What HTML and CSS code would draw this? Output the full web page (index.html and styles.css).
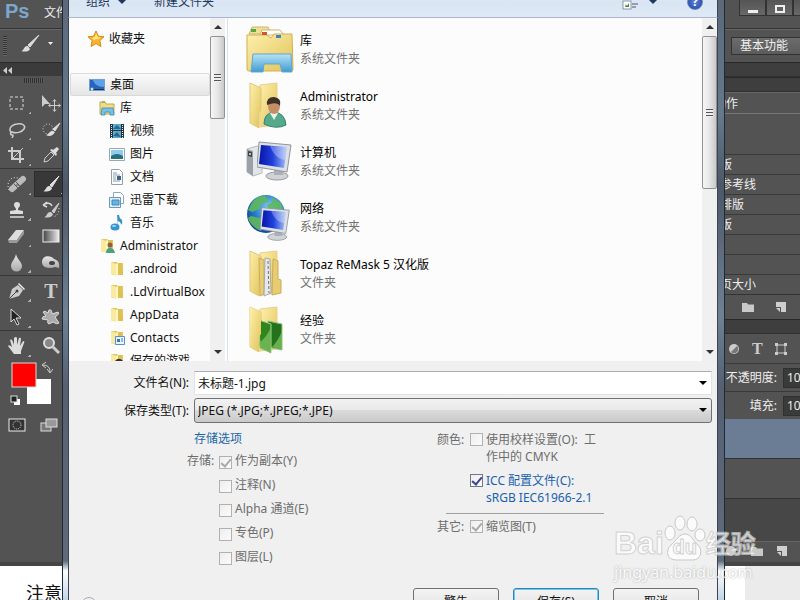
FILE: index.html
```html
<!DOCTYPE html>
<html lang="zh-CN">
  <head>
    <title>存储为</title>
    <meta charset="UTF-8" />
    <link rel="stylesheet" href="styles.css">
  </head>
  <body>
    <svg class="defs" aria-hidden="true">
      <defs>
        <linearGradient id="yellow" x1="0" x2="1" y2="1">
          <stop offset="0" stop-color="#fdf0ae" />
          <stop offset="1" stop-color="#e2c258" />
        </linearGradient>
        <linearGradient id="screen" x1="0" x2="1">
          <stop offset="0" stop-color="#0714a8" />
          <stop offset="0.5" stop-color="#2142dc" />
          <stop offset="1" stop-color="#a9c2f8" />
        </linearGradient>
        <linearGradient id="glass" x2="0" y2="1">
          <stop offset="0" stop-color="#b9e3f5" />
          <stop offset="1" stop-color="#3f9bd3" />
        </linearGradient>
        <linearGradient id="silver" x2="0" y2="1">
          <stop offset="0" stop-color="#e6e6e6" />
          <stop offset="1" stop-color="#aaa" />
        </linearGradient>
        <radialGradient id="globe" cx="0.6" cy="0.35" r="0.7">
          <stop offset="0" stop-color="#8ed4fa" />
          <stop offset="0.6" stop-color="#2578cc" />
          <stop offset="1" stop-color="#123f90" />
        </radialGradient>
        <symbol id="folder" viewBox="0 0 16 16">
          <path d="M2 1h6l1 1h5v12H4l-2-1z" fill="#e5c860" />
          <path d="M2 1l5 2v12l-5-2z" fill="#f9eaa0" />
          <path d="M7 3l2-1v12l-2 1z" fill="#fff6c8" />
          <path d="M9 2h4v6l1 1v5H9z" fill="#dfc050" />
        </symbol>
        <symbol id="open-folder" viewBox="0 0 48 48">
          <path d="M14 3l17-2v42l-17 2z" fill="url(#yellow)" stroke="#e6d28c" />
          <path d="M4 1l11 5v22l-2 3v15L4 41z" fill="url(#yellow)" stroke="#e0c878" />
        </symbol>
        <symbol id="monitor" viewBox="0 0 36 40">
          <ellipse cx="20" cy="35" rx="11" ry="4" fill="#d0d3d7" stroke="#999" />
          <path d="M17 27h8l1 7h-9z" fill="#aab0b6" />
          <path d="M2 1l32 3-4 27-30-5z" fill="#dde1e6" stroke="#8e959d" />
          <path d="M4 4l26 2-3 21-25-4z" fill="url(#screen)" />
          <path d="M13 5l17 1-2 13c-7-1-12-6-15-14z" fill="#fff" opacity="0.3" />
        </symbol>
        <symbol id="panel-folder" viewBox="0 0 14 12">
          <path d="M1 2h5l1 1.500h6V11H1z" fill="#c9c9c9" />
        </symbol>
        <symbol id="panel-new" viewBox="0 0 12 12">
          <path d="M1 1h10v10H6V6H1z" fill="#cfcfcf" />
          <path d="M1 7h4v4z" fill="#cfcfcf" />
        </symbol>
      </defs>
    </svg>

    <div class="desktop">
      <div class="photoshop">
        <div class="menubar">
          <span class="logo">Ps</span>
          <a class="menu" href="#">文件</a>
          <div class="window-buttons">
            <button aria-label="最小化"><svg width="12" height="12"><path d="M1 8h10v3H1z" fill="#eee" /></svg></button>
            <button aria-label="最大化"><svg width="12" height="12"><rect x="2" y="4" width="8" height="6" fill="none" stroke="#eee" stroke-width="2" /></svg></button>
            <button aria-label="关闭"></button>
          </div>
        </div>

        <div class="optionbar">
          <span class="grip-tall"></span>
          <button class="brush-preset" aria-label="画笔">
            <svg width="34" height="18" viewBox="0 0 34 18">
              <path d="M19 0L8 10l2 2z" fill="#ddd" stroke="#ddd" />
              <path d="M1 16c3 0 3-6 7-5l2 3c-1 3-6 3-9 2z" fill="#ddd" />
              <path d="M28 7h5l-2.500 3z" fill="#eee" />
            </svg>
          </button>
          <button class="workspace-button">基本功能</button>
        </div>

        <div class="main">
          <div class="tools">
            <div class="tools-header"><svg width="9" height="7"><path d="M4 0v7L0 3.500zM9 0v7L5 3.500z" fill="#ccc" /></svg></div>
            <div class="grip"></div>
            <div class="tool-group">
              <button aria-label="矩形选框"><svg viewBox="0 0 20 20"><rect x="3" y="4" width="13" height="12" fill="none" stroke="#ddd" stroke-dasharray="3 2" /></svg></button>
              <button aria-label="移动"><svg viewBox="0 0 20 20"><path d="M1 2v12l3-3h5z" fill="#ccc" /><path d="M13.500 7v11M8 12.500h11M12 8.500l1.500-2 1.500 2M12 16.500l1.500 2 1.500-2M9.500 11l-2 1.500 2 1.500M17.500 11l2 1.500-2 1.500" fill="none" stroke="#ccc" /></svg></button>
              <button aria-label="套索"><svg viewBox="0 0 20 20"><path d="M5 14c-4-3-2-8 5-9 6-1 9 2 7 5s-8 5-12 3c-2 0-2 3 0 3s1 1 0 3" fill="none" stroke="#ccc" stroke-width="1.500" /></svg></button>
              <button aria-label="快速选择"><svg viewBox="0 0 20 20"><circle cx="7" cy="10" r="5" fill="none" stroke="#ddd" stroke-dasharray="1 2" /><path d="M19 4l-7 6 2 2z" stroke="#ddd" fill="#ddd" /><path d="M5 16c3 0 4-5 7-4l2 1c-2 4-6 5-9 3z" fill="#ddd" /></svg></button>
              <button aria-label="裁剪"><svg viewBox="0 0 20 20"><path d="M5 2v12h12M1 6h12v12" fill="none" stroke="#ccc" stroke-width="2" /><path d="M4 15L16 3" stroke="#ccc" /></svg></button>
              <button aria-label="吸管"><svg viewBox="0 0 20 20"><path d="M3 17l1-4 6-6 3 3-6 6z" fill="none" stroke="#ccc" /><path d="M9 5l6 6 1-2-1-1 3-4-2-2-4 3-1-1z" fill="#ddd" /></svg></button>
            </div>
            <div class="tool-group">
              <button aria-label="修复画笔"><svg viewBox="0 0 20 20"><path d="M2 16c-3-7 1-14 9-12" fill="none" stroke="#ddd" stroke-dasharray="1 2" /><path d="M5 15L16 5" stroke="#bbb" stroke-width="6" stroke-linecap="round" /><path d="M9 8l5 5M7 10l5 5M9 11h3" stroke="#555" /></svg></button>
              <button class="active" aria-label="画笔工具"><svg viewBox="0 0 20 20"><path d="M18 2L9 11l2 2z" fill="#ddd" stroke="#ddd" /><path d="M2 17c3 0 3-6 7-5l2 2c-1 4-6 4-9 3z" fill="#ddd" /></svg></button>
              <button aria-label="仿制图章"><svg viewBox="0 0 20 20"><path d="M9 10c0-3-2-3-2-5a3 3 0 016 0c0 2-2 2-2 5l5 1v3H3v-3z" fill="#ddd" /><path d="M3 16h14v2H3z" fill="#bbb" /></svg></button>
              <button aria-label="历史记录画笔"><svg viewBox="0 0 20 20"><path d="M2 5c4-3 8-2 9 1M2 5l4-3M2 5l4 2" fill="none" stroke="#ddd" stroke-width="1.500" /><path d="M18 3l-7 8 2 2z" fill="#ccc" stroke="#ccc" /><path d="M3 17c3 0 3-6 7-5l2 2c-1 4-6 4-9 3z" fill="#ccc" /><path d="M18 8c0 5-2 8-6 9" fill="none" stroke="#ddd" stroke-dasharray="1 2" /></svg></button>
              <button aria-label="橡皮擦"><svg viewBox="0 0 20 20"><path d="M1 14L9 4h8l-7 10z" fill="#ddd" /><path d="M1 14h9v3H2zM10 14l7-10v4l-7 9z" fill="#999" /></svg></button>
              <button aria-label="渐变"><svg viewBox="0 0 20 20"><rect x="2" y="4" width="16" height="12" fill="url(#tool-gradient)" stroke="#eee" /><linearGradient id="tool-gradient"><stop stop-color="#444" /><stop offset="1" stop-color="#eee" /></linearGradient></svg></button>
              <button aria-label="模糊"><svg viewBox="0 0 20 20"><path d="M9 2c1 5 6 8 6 12a5 5 0 01-11 0c0-4 4-7 5-12z" fill="url(#silver)" /></svg></button>
              <button aria-label="减淡"><svg viewBox="0 0 20 20"><path d="M1 10c0-7 9-7 12-3 4 1 6 4 5 9l-4-1c-6 2-13 1-13-5z" fill="url(#silver)" /><ellipse cx="11" cy="11" rx="3" ry="2" fill="#444" /></svg></button>
            </div>
            <div class="tool-group">
              <button aria-label="钢笔"><svg viewBox="0 0 20 20"><path d="M2 18L5 8l6-4 5 5-4 6z" fill="#ccc" /><path d="M12 2l6 6-1 1-6-6z" fill="#eee" /><path d="M2 18l7-7" stroke="#444" /><circle cx="10" cy="10" r="1.500" fill="#444" /></svg></button>
              <button class="type-tool" aria-label="文字">T</button>
              <button aria-label="路径选择"><svg viewBox="0 0 20 20"><path d="M4 2v13l3-3 3 6 2-1-3-6h5z" fill="#222" stroke="#ddd" /></svg></button>
              <button aria-label="自定形状"><svg viewBox="0 0 20 20"><path d="M8 3q3-1 3 4l6-2q2 2-3 5l4 6q-2 2-6-1l-4 2q-2 0-1-4l-6-1q0-3 4-3L2 5q2-2 5 1z" fill="#aaa" stroke="#ddd" /></svg></button>
            </div>
            <div class="tool-group">
              <button aria-label="抓手"><svg viewBox="0 0 20 20"><path d="M7 18L1 10q1-2 4 1L3 4q2-2 4 5V2q2-2 3 0v7l2-7q2-1 2 1l-1 7 3-5q2 0 1 2l-3 8v3z" fill="#ddd" /></svg></button>
              <button aria-label="缩放"><svg viewBox="0 0 20 20"><circle cx="8" cy="7" r="5" fill="#888" stroke="#ddd" stroke-width="2" /><path d="M12 11l6 6" stroke="#ccc" stroke-width="3" /></svg></button>
            </div>
            <button class="swatches" aria-label="前景色和背景色">
              <svg width="44" height="46" viewBox="0 0 44 46">
                <rect x="18" y="18" width="24" height="25" fill="#fff" />
                <rect x="3" y="2" width="24" height="24" fill="#fe0000" stroke="#dcdcdc" />
                <path d="M34 4q7 0 7 7M37 1l-4 3 4 3M38 8l3 4 3-4" fill="none" stroke="#ccc" />
                <rect x="5" y="38" width="6" height="6" fill="#fff" />
                <rect x="2" y="35" width="6" height="6" fill="#222" stroke="#ddd" />
              </svg>
            </button>
            <div class="screen-modes">
              <button aria-label="快速蒙版"><svg width="18" height="14"><rect x="1" y="1" width="16" height="12" fill="#333" stroke="#eee" /><circle cx="9" cy="7" r="4" fill="none" stroke="#ddd" stroke-dasharray="1 1" /></svg></button>
              <button aria-label="屏幕模式"><svg width="18" height="14"><rect x="1" y="5" width="10" height="8" fill="#777" stroke="#ddd" /><rect x="6" y="1" width="11" height="8" fill="#999" stroke="#ddd" /></svg></button>
            </div>
          </div>

          <div class="canvas"></div>

          <div class="panels">
            <div class="dock-head"></div>
            <div class="dock-head"></div>
            <div class="panel-tab">动作</div>
            <div class="panel-space"></div>
            <ul class="actions">
              <li>版</li>
              <li>参考线</li>
              <li>排版</li>
              <li>版</li>
              <li></li>
              <li></li>
              <li>页大小</li>
            </ul>
            <div class="panel-icons">
              <svg width="14" height="12"><use href="#panel-folder" /></svg>
              <svg width="12" height="12"><use href="#panel-new" /></svg>
            </div>
            <div class="dock-head"></div>
            <div class="layer-filters">
              <svg width="12" height="12"><circle cx="6" cy="6" r="5" fill="#ccc" /><path d="M3 9a4 4 0 006-6z" fill="#777" /></svg>
              <span class="filter-type">T</span>
              <svg width="12" height="12"><path d="M2 2h8v8H2z" fill="none" stroke="#ccc" /><path d="M0 0h3v3H0zM9 0h3v3H9zM0 9h3v3H0zM9 9h3v3H9z" fill="#ccc" /></svg>
            </div>
            <div class="layer-field">
              <label for="opacity">不透明度:</label>
              <input id="opacity" type="text" value="100%" />
            </div>
            <div class="layer-field">
              <label for="fill">填充:</label>
              <input id="fill" type="text" value="100%" />
            </div>
            <div class="layer selected"></div>
            <div class="layer"></div>
            <div class="layer-empty"></div>
            <div class="layer-icons">
              <svg width="14" height="12"><circle cx="7" cy="6" r="5" fill="#ccc" /></svg>
              <svg width="14" height="12"><use href="#panel-folder" /></svg>
              <svg width="12" height="12"><use href="#panel-new" /></svg>
            </div>
          </div>
        </div>
      </div>

      <div class="page">注意</div>

      <div class="dialog">
        <div class="dialog-toolbar">
          <button class="organize">组织</button>
          <button>新建文件夹</button>
          <div class="view-buttons">
            <button class="view-mode" aria-label="更改视图"><svg width="17" height="18"><rect x="1" y="8" width="8" height="8" fill="#fff" stroke="#8897a8" /><path d="M3 14l1-3 1 2 2-3v4z" fill="#4d8a47" /><path d="M10 11h6M10 14h4" stroke="#556" /></svg></button>
            <button class="help" aria-label="帮助">?</button>
          </div>
        </div>

        <div class="browser">
          <ul class="tree">
            <li class="favorites">
              <svg viewBox="0 0 16 16"><path d="M8 0l2.400 5.200 5.600.6-4.200 3.800L13 15.500l-5-2.900-5 2.900 1.200-5.900L0 5.800l5.600-.6z" fill="#fbb52b" stroke="#d98613" /><path d="M8 2l1.500 4 3.500 1-7 2-2-2 3-1z" fill="#ffe98b" /></svg>
              收藏夹
            </li>
            <li class="current">
              <svg viewBox="0 0 16 16"><rect x="0.500" y="2.500" width="15" height="11" fill="#2863bd" stroke="#7d9cc8" /><path d="M4 3h11v7C9 10 5 7 4 3z" fill="#5ca0ea" /><path d="M1 12h14v1H1z" fill="#173657" /><circle cx="3" cy="12" r="1.500" fill="#bde5f8" /></svg>
              桌面
            </li>
            <li class="level-1">
              <svg viewBox="0 0 16 16"><path d="M1 2h5l1 2h8v10H1z" fill="#f4dc83" stroke="#c2a84c" /><path d="M3 8h11l1 7h-4v-3H6v3H2z" fill="#79c1e4" stroke="#4a97c0" /><path d="M3 2h3" stroke="#58a94e" /></svg>
              库
            </li>
            <li class="level-2">
              <svg viewBox="0 0 16 16"><path d="M1 1h14v14H1z" fill="#28343f" /><path d="M4 1h8v6H4zM4 8h8v7H4z" fill="#58acd2" /><path d="M4 6l4-4 4 4zM4 13l4-4 4 5z" fill="#2b6587" /><path d="M2.500 2v13M13.500 2v13" stroke="#e7eef2" stroke-dasharray="1 1" /></svg>
              视频
            </li>
            <li class="level-2">
              <svg viewBox="0 0 16 16"><path d="M.500 2.500h15v12H.500z" fill="#fff" stroke="#97a7b5" /><path d="M2 4h12v9H2z" fill="#90cdec" /><path d="M2 10q6-4 12 0v3H2z" fill="#286f82" /></svg>
              图片
            </li>
            <li class="level-2">
              <svg viewBox="0 0 16 16"><path d="M2.500.500h8l3 3v12h-11z" fill="#fff" stroke="#93a0aa" /><path d="M4 4h4M4 6h7M4 8h3M4 10h3M4 12h7" stroke="#8199b0" /><path d="M8 7h4v4H8z" fill="#3c6388" /></svg>
              文档
            </li>
            <li class="level-2">
              <svg viewBox="0 0 16 16"><path d="M4.500.500h7l3 3v8h-10z" fill="#fff" stroke="#8daabd" /><path d="M.500 5.500h11v10H.500z" fill="#e1f1fa" stroke="#6998b5" /><path d="M3 8h7v5H3z" fill="#65b4df" stroke="#4288b4" /></svg>
              迅雷下载
            </li>
            <li class="level-2">
              <svg viewBox="0 0 16 16"><path d="M8 0h2q0 3 3 5 1 3-1 5 0-3-3-4v6z" fill="#3990c5" /><ellipse cx="6" cy="12" rx="4.500" ry="3.500" fill="#3794ce" /><ellipse cx="5" cy="11" rx="2" ry="1" fill="#9cdcf5" /></svg>
              音乐
            </li>
            <li class="level-1">
              <svg viewBox="0 0 16 16"><use href="#folder" /><circle cx="11" cy="7" r="2.500" fill="#8b6247" /><path d="M7 15q0-5 4-5t5 5z" fill="#4aa083" /></svg>
              Administrator
            </li>
            <li class="level-2"><svg><use href="#folder" /></svg>.android</li>
            <li class="level-2"><svg><use href="#folder" /></svg>.LdVirtualBox</li>
            <li class="level-2"><svg><use href="#folder" /></svg>AppData</li>
            <li class="level-2">
              <svg viewBox="0 0 16 16"><use href="#folder" /><path d="M6.500 6.500h9v8h-9z" fill="#eaf5ff" stroke="#5891bf" /><path d="M8 9h3v3H8z" fill="#3478bb" /><path d="M12 9h2M12 11h2" stroke="#3478bb" /></svg>
              Contacts
            </li>
            <li class="level-2">
              <svg viewBox="0 0 16 16"><use href="#folder" /><path d="M6 8q4-5 9 1v7H8z" fill="#333" /></svg>
              保存的游戏
            </li>
          </ul>
          <div class="scrollbar">
            <span class="arrow-up"></span>
            <span class="thumb tree-thumb"></span>
            <span class="arrow-down"></span>
          </div>

          <ul class="files">
            <li>
              <svg viewBox="0 0 48 48">
                <path d="M3 8l3-7h16l3 7z" fill="#f1df94" stroke="#cdb768" />
                <path d="M14 9l2-5h18l4 5z" fill="#fff" stroke="#cdb768" />
                <path d="M1 9h20l4 3 3-4h18l1 35q0 2-2 2H3q-2 0-2-2z" fill="url(#yellow)" stroke="#cfb153" />
                <path d="M5 3h5v3H5z" fill="#54a748" /><path d="M16 6h5v3h-5z" fill="#d0562d" /><path d="M30 9h5v3h-5z" fill="#3f83c8" />
                <path d="M7 28h38l1 18H36l-2-8H18l-1 8H5z" fill="url(#glass)" stroke="#5fa9cf" />
              </svg>
              <div><div class="file-name">库</div><div class="file-type">系统文件夹</div></div>
            </li>
            <li>
              <svg viewBox="0 0 48 48">
                <use href="#open-folder" />
                <path d="M18 42q0-11 10-12 11 1 12 13-10 5-22-1z" fill="#55a98c" stroke="#378168" />
                <path d="M24 31l4 7 4-7z" fill="#eef5f0" />
                <ellipse cx="28" cy="24" rx="6" ry="8" fill="#c48e66" />
                <path d="M21 23q-1-8 7-8 8 1 6 9-3-5-13-1z" fill="#403027" />
              </svg>
              <div><div class="file-name">Administrator</div><div class="file-type">系统文件夹</div></div>
            </li>
            <li>
              <svg viewBox="0 0 48 48">
                <path d="M1 11l10-3 5 2v25l-9 3-6-4z" fill="#e3e6e9" stroke="#b5babf" />
                <path d="M1 11l6 2v25l-6-4z" fill="#9ba1a8" /><path d="M2 13l4 1v5l-4-1z" fill="#3c4247" /><circle cx="4" cy="16" r="1" fill="#dff3c8" />
                <use href="#monitor" x="11" y="3" width="36" height="40" />
              </svg>
              <div><div class="file-name">计算机</div><div class="file-type">系统文件夹</div></div>
            </li>
            <li>
              <svg viewBox="0 0 48 48">
                <circle cx="20" cy="20" r="19" fill="url(#globe)" />
                <path d="M7 7q7-6 13-5l2 6-7 2-2 5-7 3-4-2zM25 3l10 6 3 9-7-3-8 2-2-6 6-3zM5 22l9 2 4 6-3 7Q5 33 2 24z" fill="#5eb95c" opacity="0.9" />
                <use href="#monitor" x="14" y="12" width="31" height="36" />
              </svg>
              <div><div class="file-name">网络</div><div class="file-type">系统文件夹</div></div>
            </li>
            <li>
              <svg viewBox="0 0 48 48">
                <use href="#open-folder" />
                <path d="M13 8l5 2v34l-4 2zM27 9l5 2v18l3 1v13l-9 2z" fill="#e7cc73" stroke="#c9ad57" />
                <path d="M19 8l5 1 1 34-7 3z" fill="#e8e8e8" stroke="#aaa" /><path d="M22 11l1 32" stroke="#6f7375" stroke-dasharray="3 2" />
              </svg>
              <div><div class="file-name">Topaz ReMask 5 汉化版</div><div class="file-type">文件夹</div></div>
            </li>
            <li>
              <svg viewBox="0 0 48 48">
                <use href="#open-folder" />
                <path d="M22 15l14 3v26l-14-3z" fill="#24731c" stroke="#94c582" />
                <path d="M13 14l12 4v29l-11-5z" fill="#2f861f" stroke="#adcf98" />
                <path d="M13 37q8-6 12-16v26l-11-5zM26 41q6-6 10-16v19z" fill="#78bf5c" opacity="0.8" />
                <path d="M4 1l11 5v22l-2 3v15L4 41z" fill="url(#yellow)" />
              </svg>
              <div><div class="file-name">经验</div><div class="file-type">文件夹</div></div>
            </li>
          </ul>
          <div class="scrollbar">
            <span class="arrow-up"></span>
            <span class="thumb files-thumb"></span>
            <span class="arrow-down"></span>
          </div>
        </div>

        <form class="save-form">
          <div class="field">
            <label for="file-name">文件名(N):</label>
            <div class="combo"><input id="file-name" type="text" value="未标题-1.jpg" /></div>
          </div>
          <div class="field">
            <label for="file-format">保存类型(T):</label>
            <div class="combo">
              <select id="file-format">
                <option>JPEG (*.JPG;*.JPEG;*.JPE)</option>
              </select>
            </div>
          </div>

          <div class="options">
            <div class="save-options">
              <a class="options-title" href="#">存储选项</a>
              <div class="option">
                <span class="option-label">存储:</span>
                <label><input type="checkbox" checked disabled />作为副本(Y)</label>
              </div>
              <div class="option"><label><input type="checkbox" disabled />注释(N)</label></div>
              <div class="option"><label><input type="checkbox" disabled />Alpha 通道(E)</label></div>
              <div class="option"><label><input type="checkbox" disabled />专色(P)</label></div>
              <div class="option"><label><input type="checkbox" disabled />图层(L)</label></div>
            </div>
            <div class="color-options">
              <div class="color-row">
                <span>颜色:</span>
                <label><input type="checkbox" disabled /><span>使用校样设置(O):&nbsp; 工<br />作中的 CMYK</span></label>
              </div>
              <div class="color-row">
                <span></span>
                <label class="enabled"><input type="checkbox" checked /><span>ICC 配置文件(C):<br />sRGB IEC61966-2.1</span></label>
              </div>
              <hr />
              <div class="color-row">
                <span>其它:</span>
                <label><input type="checkbox" checked disabled /><span>缩览图(T)</span></label>
              </div>
            </div>
          </div>

          <div class="actions-row">
            <span class="collapse"></span>
            <button type="button">警告</button>
            <button type="button" class="default">保存(S)</button>
            <button type="button">取消</button>
          </div>
        </form>
      </div>

      <div class="watermark">
        <div class="watermark-brand">
          <span class="brand-bai">Bai</span>
          <span class="paw">
            <svg width="42" height="46" viewBox="0 0 42 46">
              <g fill="#fff" stroke="#bbb">
                <ellipse cx="6" cy="18" rx="5" ry="7" />
                <ellipse cx="16" cy="8" rx="5" ry="7" />
                <ellipse cx="28" cy="9" rx="5" ry="7" />
                <ellipse cx="36" cy="20" rx="5" ry="6" />
                <path d="M21 19c6 0 8 7 13 11 5 5 3 15-5 15H12C3 45 1 36 7 30c5-4 8-11 14-11z" />
              </g>
            </svg>
            <span class="brand-du">du</span>
          </span>
          <span class="brand-cn">经验</span>
        </div>
        <div class="watermark-url">jingyan.baidu.com</div>
      </div>
    </div>
  </body>
</html>
```

FILE: styles.css
```css
* {
  box-sizing: border-box;
}

body {
  margin: 0;
  font-family: "Noto Sans", "Noto Sans CJK SC", sans-serif;
  font-size: 12px;
  line-height: 18px;
  color: #111;
}

button,
input,
select {
  font: inherit;
  color: inherit;
  margin: 0;
}

button {
  padding: 0;
  border: 0;
  background: none;
}

ul {
  margin: 0;
  padding: 0;
  list-style: none;
}

.defs {
  position: absolute;
  width: 0;
  height: 0;
}

.desktop {
  position: relative;
  display: flex;
  flex-direction: column;
  height: 100vh;
  overflow: hidden;
  background: #fff;
}

/* photoshop window, runs off the right edge of the screen */
.photoshop {
  flex: 1;
  display: flex;
  flex-direction: column;
  width: calc(100% + 20px);
  min-height: 0;
  background: #535353;
  border-bottom: 4px solid #454545;
  color: #eee;
}

.menubar {
  display: flex;
  height: 29px;
  flex: none;
  align-items: flex-start;
  border-bottom: 1px solid #333;
}

.logo {
  padding-left: 5px;
  width: 44px;
  font-family: "Liberation Sans", sans-serif;
  font-size: 20px;
  font-weight: bold;
  line-height: 22px;
  color: #7ba7cf;
}

.menu {
  line-height: 26px;
  color: #eee;
  text-decoration: none;
}

.window-buttons {
  display: flex;
  margin-left: auto;
}

.window-buttons button {
  width: 27px;
  height: 16px;
  border: 1px solid #333;
  border-top: 0;
  background: linear-gradient(#555, #686868);
}

.window-buttons svg {
  display: block;
  margin: 0 auto;
}

.optionbar {
  display: flex;
  height: 33px;
  flex: none;
  align-items: center;
  border-top: 1px solid #666;
}

.grip-tall {
  width: 4px;
  height: 20px;
  margin-left: 3px;
  background: repeating-linear-gradient(#333 0 1px, #666 1px 2px);
}

.brush-preset {
  margin-left: 13px;
}

.workspace-button {
  width: 89px;
  height: 18px;
  margin-left: auto;
  padding-left: 8px;
  border: 1px solid #333;
  background: linear-gradient(#6c6c6c, #5b5b5b);
  line-height: 16px;
  text-align: left;
}

.main {
  flex: 1;
  display: flex;
  min-height: 0;
}

.tools {
  width: 68px;
}

.tools-header {
  height: 14px;
  padding: 3px;
  border-top: 1px solid #2b2b2b;
  background: #3b3b3b;
  line-height: 7px;
}

.grip {
  width: 20px;
  height: 5px;
  margin: 2px 24px 7px;
  background: repeating-linear-gradient(90deg, #2f2f2f 0 1px, #5c5c5c 1px 2px);
}

.tool-group {
  display: grid;
  grid-template-columns: 34px 34px;
  border-bottom: 1px solid #383838;
  margin-bottom: 2px;
}

.tool-group:nth-of-type(6) {
  border: 0;
}

.tool-group button {
  display: flex;
  height: 26px;
  align-items: center;
  justify-content: center;
  background: linear-gradient(135deg, transparent 50%, #aaa 50%) no-repeat right 3px bottom 2px / 3px 3px;
}

.tool-group .active {
  border: 1px solid #2d2d2d;
  background-color: #383838;
}

.tool-group svg {
  width: 20px;
  height: 20px;
}

.type-tool,
.filter-type {
  font-family: "Liberation Serif", serif;
  font-weight: bold;
  color: #ccc;
}

.type-tool {
  font-size: 20px;
}

.filter-type {
  font-size: 16px;
  line-height: 12px;
}

.swatches {
  display: block;
  margin: 1px 0 0 9px;
}

.swatches svg {
  display: block;
}

.screen-modes {
  display: flex;
  gap: 14px;
  padding: 11px 8px;
}

.canvas {
  flex: 1;
}

.panels {
  width: 132px;
  background: #535353;
}

.dock-head {
  height: 15px;
  border-top: 1px solid #292929;
  border-bottom: 1px solid #303030;
  background: #3e3e3e;
}

.panel-tab {
  height: 22px;
  padding-left: 26px;
  border-top: 1px solid #666;
  border-bottom: 1px solid #777;
  line-height: 22px;
}

.panel-space {
  height: 40px;
}

.actions {
  border-bottom: 1px solid #333;
}

.actions li {
  height: 20px;
  padding-left: 32px;
  border-top: 1px solid #393939;
  line-height: 19px;
}

.panel-icons,
.layer-filters,
.layer-icons {
  display: flex;
  align-items: center;
}

.panel-icons {
  height: 24px;
  gap: 20px;
  padding-left: 53px;
}

.layer-filters {
  height: 29px;
  gap: 12px;
  padding-left: 40px;
}

.layer-field {
  display: flex;
  align-items: center;
  gap: 6px;
  height: 28px;
  border-top: 1px solid #3a3a3a;
}

.layer-field label {
  width: 89px;
  flex: none;
  text-align: right;
}

.layer-field input {
  width: 37px;
  height: 20px;
  padding: 0 3px;
  border: 1px solid #303030;
  background: #3a3a3a;
}

.layer {
  height: 40px;
  border-bottom: 1px solid #333;
}

.layer.selected {
  background: #6a7d94;
}

.layer-empty {
  height: 42px;
  background: #474747;
}

.layer-icons {
  height: 19px;
  gap: 12px;
  padding-left: 36px;
  border-top: 1px solid #666;
}

/* page below the editor window */
.page {
  height: 34px;
  flex: none;
  padding: 14px 0 0 26px;
  background: linear-gradient(270deg, #ebebeb 55px, #fff 55px);
  font-size: 18px;
  line-height: 26px;
  white-space: nowrap;
}

/* save dialog, a floating window */
.dialog {
  position: absolute;
  top: -14px;
  right: 75px;
  bottom: -16px;
  left: 62px;
  display: flex;
  flex-direction: column;
  border: solid #1e2a38;
  border-width: 0 1px;
  padding: 0 6px 0 5px;
  background: linear-gradient(#5a6778 0, #66788b 130px, #4b5867 200px, #718096 330px, #536172 400px, #5d6b7c 575px, #fff 585px, #b6cae0 620px);
}

.dialog-toolbar,
.browser,
.save-form {
  border: solid #3b4450;
  border-width: 0 1px;
}

.dialog-toolbar {
  display: flex;
  align-items: center;
  gap: 28px;
  height: 32px;
  flex: none;
  padding: 0 14px 0 17px;
  border-bottom: 1px solid #a9b8cc;
  background: linear-gradient(#f5f9fd, #d9e5f3 50%, #dfe9f6);
  color: #1e395b;
}

.organize::after {
  content: "";
  display: inline-block;
  margin-left: 8px;
  border: 4px solid transparent;
  border-top-color: #1e395b;
  border-bottom: 0;
  vertical-align: middle;
}

.view-buttons {
  display: flex;
  align-items: center;
  gap: 30px;
  margin-left: auto;
}

.view-mode {
  display: flex;
  align-items: center;
  gap: 10px;
}

.view-mode::after {
  content: "";
  border: 4px solid transparent;
  border-top-color: #1e395b;
  border-bottom: 0;
}

.help {
  width: 16px;
  height: 16px;
  border: 1px solid #6a87bd;
  border-radius: 50%;
  background: radial-gradient(#5d87dc, #1a3c9c);
  color: #fff;
  font-weight: bold;
  line-height: 14px;
}

.browser {
  display: flex;
  height: 343px;
  flex: none;
  background: #fcfcfc;
}

.tree {
  width: 141px;
  padding: 9px 0 0 1px;
  overflow: hidden;
  white-space: nowrap;
}

.tree li {
  display: flex;
  align-items: center;
  gap: 5px;
  height: 23px;
}

.tree svg {
  width: 16px;
  height: 16px;
  flex: none;
}

.tree .favorites {
  margin-bottom: 23px;
  padding-left: 18px;
}

.tree .current {
  padding-left: 18px;
  border: 1px solid #d9d9d9;
  border-radius: 2px;
  background: linear-gradient(#fafafa, #e6e6e6);
}

.tree .level-1 {
  padding-left: 29px;
}

.tree .level-2 {
  padding-left: 39px;
}

.scrollbar {
  display: flex;
  flex-direction: column;
  align-items: center;
  width: 15px;
  background: #f0f0f0;
}

.arrow-up,
.arrow-down {
  margin: 7px 0;
  border: 4px solid transparent;
}

.arrow-up {
  border-top: 0;
  border-bottom-color: #333;
}

.arrow-down {
  margin-top: auto;
  border-bottom: 0;
  border-top-color: #333;
}

.thumb {
  display: flex;
  width: 15px;
  border: 1px solid #929292;
  border-radius: 2px;
  background: linear-gradient(90deg, #f6f6f6, #e6e6e6 50%, #c9c9c9);
}

.thumb::after {
  content: "";
  width: 7px;
  height: 8px;
  margin: auto;
  background: repeating-linear-gradient(#555 0 1px, #eee 1px 3px);
}

.tree-thumb {
  height: 83px;
}

.files-thumb {
  height: 153px;
}

.files {
  flex: 1;
  margin-left: 2px;
  padding: 4px 0 0 18px;
  border-left: 1px solid #d6e2f1;
}

.files li {
  display: flex;
  align-items: center;
  gap: 6px;
  height: 56px;
}

.files svg {
  width: 48px;
  height: 48px;
}

.file-name {
  color: #000;
}

.file-type {
  color: #727272;
}

.save-form {
  flex: 1;
  padding: 10px 5px 0 0;
  background: #f0f0f0;
}

.field {
  display: flex;
  align-items: center;
  gap: 5px;
  margin-bottom: 3px;
}

.field > label {
  width: 120px;
  text-align: right;
}

.combo {
  position: relative;
  flex: 1;
}

.combo::after {
  content: "";
  position: absolute;
  top: 10px;
  right: 5px;
  border: 4px solid transparent;
  border-top-color: #000;
  border-bottom: 0;
  pointer-events: none;
}

.combo input,
.combo select {
  display: block;
  width: 100%;
  height: 24px;
  padding: 0 3px;
  border: 1px solid #e2e3ea;
  border-top-color: #abadb3;
  background: #fff;
  appearance: none;
}

.combo select {
  height: 25px;
  border: 1px solid #707070;
  border-radius: 3px;
  background: linear-gradient(#f2f2f2, #e8e8e8 48%, #dadada 50%, #cacaca);
}

.options {
  display: flex;
  justify-content: space-between;
  height: 162px;
  color: #6d6d6d;
}

.save-options {
  padding: 4px 0 0 118px;
}

.options-title {
  display: block;
  margin: 0 0 1px 7px;
  color: #1a66a8;
  text-decoration: none;
}

.option {
  display: flex;
  justify-content: flex-end;
  width: 140px;
  height: 24px;
}

.option label {
  display: flex;
  align-items: center;
  gap: 3px;
  width: 108px;
  white-space: nowrap;
}

.option-label {
  flex: 1;
  line-height: 24px;
}

.options input {
  display: flex;
  width: 13px;
  height: 13px;
  flex: none;
  margin-top: 2px;
  border: 1px solid #b1b1b1;
  background: linear-gradient(135deg, #eee, #fbfbfb);
  appearance: none;
}

.options input:checked::after {
  content: "";
  width: 4px;
  height: 8px;
  margin: 0 auto;
  border: solid #aaa;
  border-width: 0 2px 2px 0;
  transform: rotate(40deg);
}

.options .enabled input {
  border-color: #707880;
}

.options .enabled input:checked::after {
  border-color: #3a4790;
}

.color-options {
  width: 166px;
  margin-right: 109px;
  padding-top: 5px;
}

.color-row {
  display: grid;
  grid-template-columns: 30px 1fr;
  gap: 3px;
  margin-bottom: 7px;
  line-height: 17px;
  white-space: nowrap;
}

.color-row label {
  display: flex;
  gap: 3px;
}

.color-row .enabled {
  color: #1a62ad;
}

.color-options hr {
  width: 158px;
  margin: 0 0 4px 9px;
  border: 0;
  border-top: 1px solid #a0a0a0;
}

.actions-row {
  display: flex;
  gap: 14px;
  padding-right: 13px;
}

.actions-row button {
  width: 86px;
  height: 28px;
  border: 1px solid #707070;
  border-radius: 3px;
  background: linear-gradient(#f4f4f4, #ddd);
}

.actions-row .default {
  border-color: #3c7fb1;
  box-shadow: inset 0 0 0 1px #5fd0f2;
}

.collapse {
  width: 16px;
  height: 16px;
  margin: 9px auto 0 12px;
  border: 1px solid #aab;
  border-radius: 50%;
}

.watermark {
  position: absolute;
  right: 44px;
  bottom: 17px;
  width: 142px;
  color: #fff;
  opacity: 0.75;
  pointer-events: none;
}

.watermark-brand {
  display: flex;
  align-items: flex-end;
  height: 46px;
  font-weight: bold;
  line-height: 36px;
  -webkit-text-stroke: 1px #c8c8c8;
}

.brand-bai {
  font-family: "Liberation Sans", sans-serif;
  font-size: 32px;
}

.paw {
  position: relative;
  height: 46px;
}

.brand-du {
  position: absolute;
  right: 0;
  bottom: -4px;
  left: 0;
  font-family: "Liberation Sans", sans-serif;
  font-size: 20px;
  text-align: center;
}

.brand-cn {
  font-size: 25px;
}

.watermark-url {
  font-size: 16px;
  line-height: 22px;
  text-shadow: 0 0 2px #888;
}
```
